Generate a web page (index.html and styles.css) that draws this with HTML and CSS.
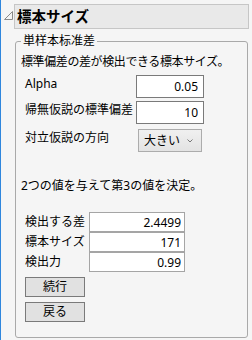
FILE: index.html
```html
<!DOCTYPE html>
<html lang="ja">
	<head>
		<meta charset="UTF-8" />
		<meta name="viewport" content="width=device-width, initial-scale=1.0" />
		<title>標本サイズ</title>
		<link rel="stylesheet" href="styles.css">
	</head>
	<body>
		<div class="title-row">
			<svg class="disclosure" width="9" height="9" viewBox="0 0 9 9">
				<path d="M8.5 0.5 V8.5 H0.5 Z" fill="none" stroke="#8a8a8a" stroke-width="1" />
			</svg>
			<div class="title-box">
				<h1>標本サイズ</h1>
			</div>
		</div>
		<fieldset class="group">
			<legend>単样本标准差</legend>
			<p class="intro">標準偏差の差が検出できる標本サイズ。</p>
			<div class="params">
				<label for="alpha">Alpha</label>
				<input type="text" id="alpha" value="0.05" />
				<label for="sd0">帰無仮説の標準偏差</label>
				<input type="text" id="sd0" value="10" />
				<label class="dir-label">対立仮説の方向</label>
				<button class="dropdown">
					<span>大きい</span>
					<svg width="6" height="4" viewBox="0 0 6 4">
						<path d="M0.5 0.5 L3 3 L5.5 0.5" fill="none" stroke="#777" stroke-width="1" />
					</svg>
				</button>
			</div>
			<p class="note">2つの値を与えて第3の値を決定。</p>
			<div class="calc">
				<label for="diff">検出する差</label>
				<input type="text" id="diff" value="2.4499" />
				<label for="n">標本サイズ</label>
				<input type="text" id="n" value="171" />
				<label for="power">検出力</label>
				<input type="text" id="power" value="0.99" />
			</div>
			<div class="actions">
				<button>続行</button>
				<button>戻る</button>
			</div>
		</fieldset>
	</body>
</html>
```

FILE: styles.css
```css
* {
	margin: 0;
	padding: 0;
	box-sizing: border-box;
}

body {
	font-family: "Noto Sans", "Noto Sans CJK JP", sans-serif;
	font-size: 12px;
	line-height: 16px;
	color: #000;
	background-color: #f5f5f5;
	border-left: 1px solid #2f86dd;
	min-height: 340px;
}

/* header */
.title-row {
	display: flex;
	align-items: flex-start;
	padding-top: 4px;
	margin: 0 3px 0 3px;
}

.disclosure {
	margin-top: 7px;
	margin-right: 1px;
	flex-shrink: 0;
}

.title-box {
	flex: 1;
	height: 25px;
	background-color: #e9e9e9;
	border: 1px solid #c6c6c6;
	padding-left: 2px;
}

h1 {
	font-size: 14.5px;
	font-weight: 700;
	line-height: 22px;
}

/* group box */
.group {
	margin: 4px 4px 0 14px;
	border: 1px solid #a9a9a9;
	border-radius: 3px;
	padding: 5px 5px 15px 5px;
}

.group legend {
	padding: 0 2px;
	line-height: 16px;
}

.intro,
.note {
	line-height: 16px;
}

.intro {
	letter-spacing: -0.4px;
}

.note {
	margin-top: 26px;
}

.params {
	display: grid;
	grid-template-columns: 111px 68px;
	row-gap: 3px;
	margin-top: 5px;
	padding-left: 4px;
}

.params label {
	padding-top: 1px;
}

.params input {
	height: 23px;
	border: 1px solid #7a7a7a;
	background: #fff;
	font: inherit;
	text-align: right;
	padding-right: 5px;
	outline: none;
}

.dir-label {
	margin-top: 2px;
}

.dropdown {
	margin: 2px 2px 0 2px;
	height: 23px;
	display: flex;
	align-items: center;
	justify-content: space-between;
	padding: 0 8px 0 5px;
	font: inherit;
	background: linear-gradient(#f0f0f0, #e3e3e3);
	border: 1px solid #acacac;
}

.calc {
	display: grid;
	grid-template-columns: 64px 96px;
	margin-top: 18px;
	padding-left: 4px;
}

.calc label {
	line-height: 20px;
}

.calc input {
	height: 20px;
	border: 1px solid #a5a5a5;
	background: #fff;
	font: inherit;
	text-align: right;
	padding-right: 3px;
	outline: none;
}

.actions {
	display: flex;
	flex-direction: column;
	align-items: flex-start;
	gap: 5px;
	margin-top: 5px;
	padding-left: 4px;
}

.actions button {
	width: 60px;
	height: 20px;
	font: inherit;
	background-color: #e1e1e1;
	border: 1px solid #7a7a7a;
}
```
